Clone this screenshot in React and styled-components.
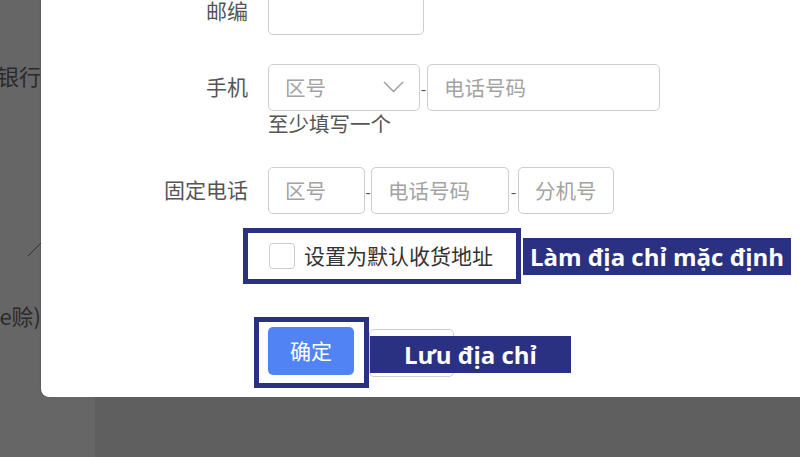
import styled, { createGlobalStyle } from 'styled-components';

const GlobalStyle = createGlobalStyle`
  html, body { margin: 0; padding: 0; }
  body {
    font-family: "Noto Sans CJK SC", "Noto Sans", sans-serif;
    background: #666;
  }
`;

const Page = styled.div`
  width: 800px;
  height: 457px;
  overflow: hidden;
  display: grid;
  grid-template-columns: 41px 54px 1fr;
  grid-template-rows: 397px 60px;
  background: #666;
`;

const LeftStrip = styled.div`
  grid-column: 1;
  grid-row: 1;
  overflow: hidden;
  display: flex;
  flex-direction: column;
  align-items: flex-end;
`;

const BgText = styled.div`
  margin-top: ${p => p.$top}px;
  font-size: 22px;
  line-height: 24px;
  color: #2a2a2a;
  white-space: nowrap;
`;

const Slash = styled.svg`
  margin-top: ${p => p.$top}px;
  flex-shrink: 0;
`;

const BandLight = styled.div`
  grid-column: 1 / 3;
  grid-row: 2;
  background: #666;
`;

const BandDark = styled.div`
  grid-column: 3;
  grid-row: 2;
  background: #5f5f5f;
`;

const Modal = styled.div`
  grid-column: 2 / 4;
  grid-row: 1;
  margin-top: -30px;
  padding-top: 18px;
  background: #fff;
  border-bottom-left-radius: 8px;
  box-shadow: 0 1px 2px rgba(0, 0, 0, 0.25);
`;

const FormRow = styled.div`
  display: grid;
  grid-template-columns: 207px 1fr;
  column-gap: 20px;
  margin-top: ${p => p.$gap || 0}px;
`;

const Label = styled.div`
  text-align: right;
  font-size: 21px;
  line-height: 44px;
  padding-bottom: 3px;
  color: #555;
`;

const FieldStack = styled.div`
  display: flex;
  flex-direction: column;
`;

const Fields = styled.div`
  display: flex;
  align-items: center;
`;

const Box = styled.div`
  width: ${p => p.$w}px;
  height: 47px;
  box-sizing: border-box;
  border: 1px solid #cdcdcd;
  border-radius: 5px;
  padding: 0 15px 2px 16px;
  display: flex;
  align-items: center;
  justify-content: space-between;
  font-size: 20.5px;
  color: #a3a3a3;
  background: #fff;
`;

const Dash = styled.span`
  width: ${p => p.$w || 7}px;
  text-align: center;
  font-size: 16px;
  color: #555;
`;

const Hint = styled.div`
  margin-top: 1px;
  font-size: 20.5px;
  line-height: 22px;
  color: #555;
`;

const Highlight = styled.div`
  display: flex;
  align-items: center;
  gap: 9px;
  margin-left: ${p => p.$shift}px;
  padding: ${p => p.$pad};
  border: 5px solid #2a3182;
  background: #fff;
`;

const Checkbox = styled.span`
  width: 26px;
  height: 26px;
  box-sizing: border-box;
  border: 1px solid #cdcdcd;
  border-radius: 4px;
  background: #fff;
`;

const CheckText = styled.span`
  font-size: 21px;
  line-height: 24px;
  padding-bottom: 2px;
  color: #333;
`;

const Tag = styled.div`
  width: ${p => p.$w}px;
  height: 37px;
  line-height: 37px;
  text-align: center;
  background: #2a3182;
  color: #fff;
  font-family: "Open Sans", "Noto Sans", sans-serif;
  font-weight: 700;
  font-size: 24px;
  white-space: nowrap;
  margin-left: ${p => p.$ml || 0}px;
`;

const PrimaryButton = styled.div`
  width: 86px;
  height: 48px;
  box-sizing: border-box;
  padding-bottom: 2px;
  border-radius: 5px;
  background: #5283f5;
  color: #fff;
  font-size: 21px;
  display: flex;
  align-items: center;
  justify-content: center;
`;

const CancelWrap = styled.div`
  position: relative;
`;

const CancelButton = styled.div`
  width: 85px;
  height: 48px;
  box-sizing: border-box;
  border: 1px solid #cdcdcd;
  border-radius: 5px;
  background: #fff;
`;

const OverTag = styled(Tag)`
  position: absolute;
  left: 1px;
  top: 7px;
`;

function Chevron() {
  return (
    <svg width="21" height="12" viewBox="0 0 21 12">
      <polyline points="1,1 10.5,10.5 20,1" fill="none" stroke="#9a9a9a" strokeWidth="1.4" />
    </svg>
  );
}

export default function App() {
  return (
    <>
      <GlobalStyle />
      <Page>
        <LeftStrip>
          <BgText $top={63}>银行</BgText>
          <Slash $top={156} width="13" height="13" viewBox="0 0 13 13">
            <line x1="0" y1="13" x2="13" y2="0" stroke="#333" strokeWidth="1" />
          </Slash>
          <BgText $top={47}>e赊)</BgText>
        </LeftStrip>

        <Modal>
          <FormRow>
            <Label>邮编</Label>
            <Fields>
              <Box $w={156} />
            </Fields>
          </FormRow>

          <FormRow $gap={29}>
            <Label>手机</Label>
            <FieldStack>
              <Fields>
                <Box $w={152}>
                  <span>区号</span>
                  <Chevron />
                </Box>
                <Dash>-</Dash>
                <Box $w={233}>电话号码</Box>
              </Fields>
              <Hint>至少填写一个</Hint>
            </FieldStack>
          </FormRow>

          <FormRow $gap={33}>
            <Label>固定电话</Label>
            <Fields>
              <Box $w={97}>区号</Box>
              <Dash $w={6}>-</Dash>
              <Box $w={138}>电话号码</Box>
              <Dash $w={9}>-</Dash>
              <Box $w={96}>分机号</Box>
            </Fields>
          </FormRow>

          <FormRow $gap={14}>
            <span />
            <Fields>
              <Highlight $shift={-25} $pad="10px 23px 10px 21px">
                <Checkbox />
                <CheckText>设置为默认收货地址</CheckText>
              </Highlight>
              <Tag $w={268} $ml={2}>Làm địa chỉ mặc định</Tag>
            </Fields>
          </FormRow>

          <FormRow $gap={33}>
            <span />
            <Fields>
              <Highlight $shift={-14} $pad="5px 10px 8px 9px">
                <PrimaryButton>确定</PrimaryButton>
              </Highlight>
              <CancelWrap>
                <CancelButton />
                <OverTag $w={201}>Lưu địa chỉ</OverTag>
              </CancelWrap>
            </Fields>
          </FormRow>
        </Modal>

        <BandLight />
        <BandDark />
      </Page>
    </>
  );
}
